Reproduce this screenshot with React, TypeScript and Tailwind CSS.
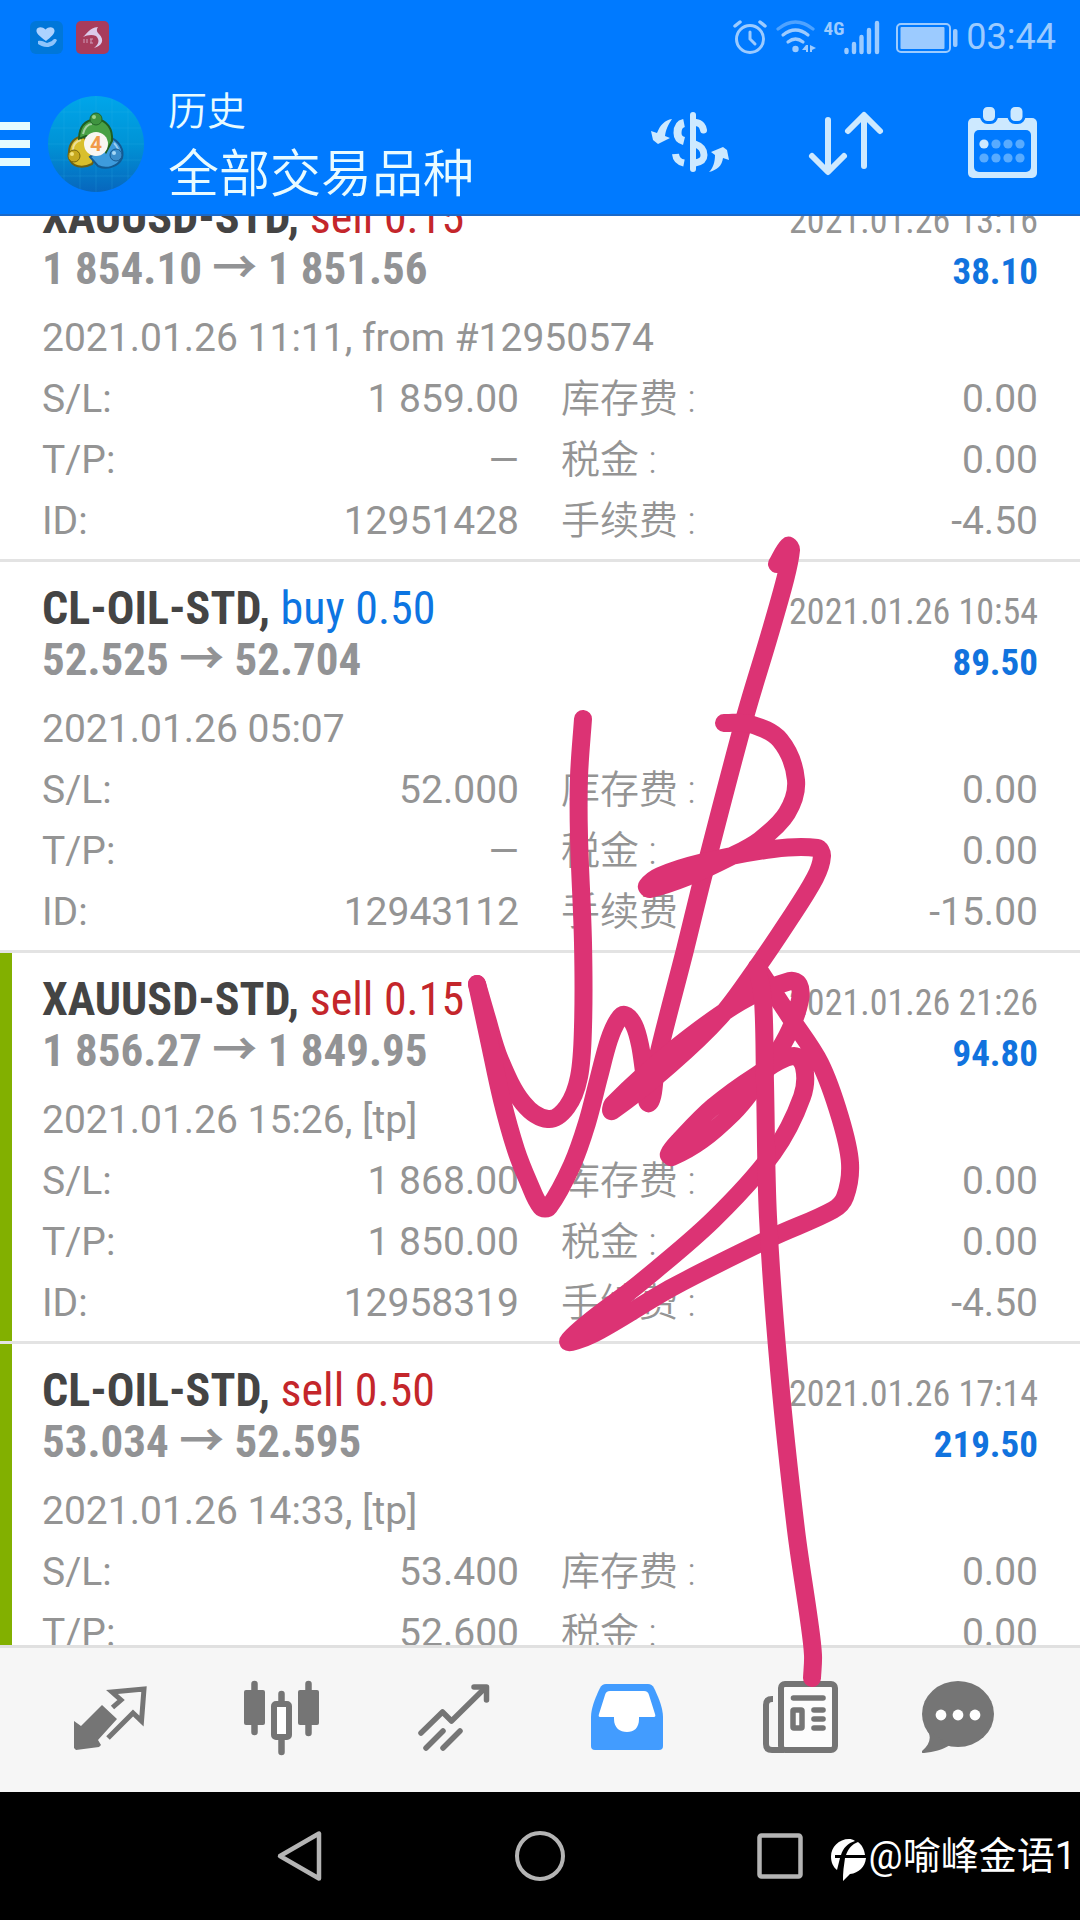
import type { ReactNode } from 'react';

type Side = 'buy' | 'sell';

interface Deal {
  id: string;
  symbol: string;
  side: Side;
  volume: string;
  open: string;
  close: string;
  closedAt: string;
  profit: string;
  note: string;
  sl: string;
  tp: string;
  swap: string;
  tax: string;
  commission: string;
  marked: boolean;
}

const deals: Deal[] = [
  {
    id: '12951428', symbol: 'XAUUSD-STD', side: 'sell', volume: '0.15',
    open: '1 854.10', close: '1 851.56', closedAt: '2021.01.26 13:16', profit: '38.10',
    note: '2021.01.26 11:11, from #12950574',
    sl: '1 859.00', tp: '—', swap: '0.00', tax: '0.00', commission: '-4.50', marked: false,
  },
  {
    id: '12943112', symbol: 'CL-OIL-STD', side: 'buy', volume: '0.50',
    open: '52.525', close: '52.704', closedAt: '2021.01.26 10:54', profit: '89.50',
    note: '2021.01.26 05:07',
    sl: '52.000', tp: '—', swap: '0.00', tax: '0.00', commission: '-15.00', marked: false,
  },
  {
    id: '12958319', symbol: 'XAUUSD-STD', side: 'sell', volume: '0.15',
    open: '1 856.27', close: '1 849.95', closedAt: '2021.01.26 21:26', profit: '94.80',
    note: '2021.01.26 15:26, [tp]',
    sl: '1 868.00', tp: '1 850.00', swap: '0.00', tax: '0.00', commission: '-4.50', marked: true,
  },
  {
    id: '12958102', symbol: 'CL-OIL-STD', side: 'sell', volume: '0.50',
    open: '53.034', close: '52.595', closedAt: '2021.01.26 17:14', profit: '219.50',
    note: '2021.01.26 14:33, [tp]',
    sl: '53.400', tp: '52.600', swap: '0.00', tax: '0.00', commission: '-15.00', marked: true,
  },
];

type Point = [number, number];

// Pen strokes drawn over the list
const strokes: Point[][] = [
  [[583, 719], [579, 777], [579, 837], [583, 943], [583, 1027], [579, 1077], [567, 1107], [548, 1119], [523, 1103], [500, 1060], [486, 1015], [477, 984]],
  [[477, 984], [489, 1040], [502, 1100], [516, 1150], [529, 1183], [541, 1207], [549, 1207], [572, 1165], [587, 1123], [599, 1077], [609, 1040], [618, 1020], [625, 1015], [634, 1025], [640, 1045], [645, 1078], [650, 1102], [657, 1060], [685, 950], [703, 877], [745, 717], [768, 640], [785, 580], [791, 550], [788, 546], [777, 564]],
  [[724, 723], [750, 724], [780, 740], [796, 780], [787, 813], [760, 840], [730, 857], [687, 877], [650, 889], [647, 886], [660, 876], [700, 863], [773, 849], [817, 848], [822, 856], [815, 878], [787, 923], [753, 973], [720, 1017], [670, 1065], [612, 1111], [613, 1104], [673, 1050], [740, 1002], [790, 981], [799, 985], [800, 1000], [790, 1030], [773, 1060], [750, 1093], [733, 1113], [702, 1140], [672, 1157], [669, 1154], [680, 1140], [713, 1107], [757, 1075], [793, 1056], [804, 1067], [802, 1097], [773, 1153], [713, 1220], [640, 1283], [569, 1340], [593, 1334], [673, 1287], [773, 1237], [833, 1210], [845, 1197], [850, 1163], [840, 1117], [820, 1063], [790, 1017], [757, 967]],
  [[757, 967], [763, 1000], [765, 1083], [768, 1217], [779, 1370], [796, 1530], [809, 1620], [813, 1655], [812, 1678]],
];

function smoothPath(points: Point[]) {
  let d = `M${points[0][0]} ${points[0][1]}`;
  for (let i = 0; i < points.length - 1; i++) {
    const p0 = points[i - 1] ?? points[i];
    const p1 = points[i];
    const p2 = points[i + 1];
    const p3 = points[i + 2] ?? p2;
    const len = Math.hypot(p2[0] - p1[0], p2[1] - p1[1]);
    const k1 = Math.min(len / (Math.hypot(p2[0] - p0[0], p2[1] - p0[1]) || 1) / 3, 0.4);
    const k2 = Math.min(len / (Math.hypot(p3[0] - p1[0], p3[1] - p1[1]) || 1) / 3, 0.4);
    const a = [p1[0] + (p2[0] - p0[0]) * k1, p1[1] + (p2[1] - p0[1]) * k1];
    const b = [p2[0] - (p3[0] - p1[0]) * k2, p2[1] - (p3[1] - p1[1]) * k2];
    d += ` C${a[0]} ${a[1]} ${b[0]} ${b[1]} ${p2[0]} ${p2[1]}`;
  }
  return d;
}

function StatusBar() {
  return (
    <div className="flex h-[74px] items-center justify-between pl-[30px] pr-6 text-[#9ccbff]">
      <div className="flex gap-[13px]">
        <svg className="h-[33px] w-[33px]" viewBox="0 0 33 33">
          <rect width="33" height="33" rx="6" fill="#0077d9" />
          <path d="M16 20C9 15 6 12 6.500 9C7 6 12 5 15.500 8.500C19 5 24 6 24.500 9.500C24.800 13 21 16 16 20Z" fill="#acd2ff" />
          <path d="M8 20C12 19 14 21 17 22L22 20C24 17 26 18 27 19C25 24 21 26 17 26C13 26 10 24 8 23Z" fill="#8fc4fb" />
        </svg>
        <svg className="h-[33px] w-[33px]" viewBox="0 0 33 33">
          <rect width="33" height="33" rx="5" fill="#a83c5c" />
          <path d="M7 16C11 13 13 7 22 6C20 9 21 11 23 13C29 19 26 25 18 27C23 23 24 19 20 15C16 13 11 14 7 16Z" fill="#dccbea" />
          <path d="M8 18V22M11 18V22M14 18H17M14 22H17M15 18V22" stroke="#cf9cb8" strokeWidth="1" />
        </svg>
      </div>
      <div className="flex items-center">
        <svg className="h-9 w-9" viewBox="0 0 36 36" fill="none" stroke="currentColor" strokeLinecap="round">
          <circle cx="18" cy="20" r="13.500" strokeWidth="3" />
          <path d="M18 13V20L23 25" strokeWidth="3" />
          <path d="M3 7L8 3M28 3L33 7" strokeWidth="3.500" />
        </svg>
        <svg className="ml-2 h-9 w-[42px]" viewBox="0 0 42 36" fill="none" stroke="currentColor" strokeWidth="3.200" strokeLinecap="round">
          <path d="M2 10Q19.500 -4 37 10" stroke="#4fa3ff" />
          <path d="M7 16Q19.500 6 32 16" />
          <path d="M12 23Q19.500 17 27 23" />
          <circle cx="19.500" cy="30" r="3.200" fill="currentColor" stroke="none" />
          <path d="M30 26L26 31H30V33H32V26ZM34 26V33H36V31L40 29L36 27Z" fill="currentColor" stroke="none" />
        </svg>
        <span className="ml-[6px] self-start font-['Roboto_Condensed',Roboto,sans-serif] text-[19px] font-bold leading-6">4G</span>
        <svg className="h-9 w-9" viewBox="0 0 36 36" stroke="currentColor" strokeWidth="4.400" strokeLinecap="round">
          <path d="M2.500 31V33M10 25V33M17.500 18V33M25 11V33M33 4V33" />
        </svg>
        <svg className="ml-4 h-9 w-[62px]" viewBox="0 0 62 36" fill="none">
          <rect x="1" y="5" width="53" height="28" rx="4" stroke="currentColor" strokeWidth="2" />
          <rect x="4.500" y="8" width="44" height="22" rx="1" fill="#9ccbff" />
          <rect x="57" y="10" width="4.500" height="18" rx="2" fill="currentColor" />
        </svg>
        <span className="ml-2 text-[36px] leading-10">03:44</span>
      </div>
    </div>
  );
}

function AppLogo() {
  return (
    <svg className="h-24 w-24" viewBox="0 0 96 96">
      <defs>
        <linearGradient id="sky" x1="0" y1="0" x2="0" y2="1">
          <stop offset="0" stopColor="#00a6ea" />
          <stop offset="0.5" stopColor="#0093d6" />
          <stop offset="1" stopColor="#0766bd" />
        </linearGradient>
        <clipPath id="disc"><circle cx="48" cy="48" r="48" /></clipPath>
      </defs>
      <circle cx="48" cy="48" r="48" fill="url(#sky)" />
      <g clipPath="url(#disc)" stroke="#35b4ea" strokeOpacity="0.2">
        <path d="M16 0V96M32 0V96M48 0V96M64 0V96M80 0V96M0 16H96M0 32H96M0 48H96M0 64H96M0 80H96" />
      </g>
      <path d="M34 40C22 43 20 52 21 62C24 71 34 73 44 68L50 56L40 45Z" fill="#d9bf2d" stroke="#6d6113" strokeWidth="2" />
      <path d="M61 41C72 45 76 54 74 62C70 71 58 74 50 70L42 61L56 50Z" fill="#3d9bdd" stroke="#135a92" strokeWidth="2" />
      <path d="M31 43C31 30 38 24 48 23C59 24 65 33 64 45L58 56L50 40H38Z" fill="#48a145" stroke="#1f5f22" strokeWidth="2" />
      <path d="M35 38C36 32 40 28 44 28M25 54C25 48 29 45 33 44M66 47C70 51 71 56 70 60" fill="none" stroke="#fff" strokeOpacity="0.5" strokeWidth="2" />
      <circle cx="48" cy="23" r="6" fill="#3f9440" stroke="#24682a" />
      <circle cx="26" cy="60" r="6" fill="#c6a81f" stroke="#75650f" />
      <circle cx="68" cy="59" r="6" fill="#3b8ecb" stroke="#165990" />
      <circle cx="46" cy="21" r="2" fill="#9fd28a" />
      <circle cx="24" cy="58" r="2" fill="#f2e27d" />
      <circle cx="66" cy="57" r="2" fill="#a7d8f6" />
      <circle cx="48" cy="48" r="12" fill="#f8f6f2" />
      <text x="48" y="55" textAnchor="middle" fontSize="21" fontWeight="700" fontFamily="Roboto, sans-serif" fill="#f19a4a">4</text>
    </svg>
  );
}

function Header() {
  return (
    <header className="border-b-2 border-[#1a69c9] bg-[#007aff]">
      <StatusBar />
      <div className="flex h-[140px] items-center">
        <button aria-label="菜单" className="flex h-24 w-[30px] flex-col justify-center gap-[10px]">
          <span className="h-2 w-full bg-[#e4fbff]" />
          <span className="h-2 w-full bg-[#e4fbff]" />
          <span className="h-2 w-full bg-[#e4fbff]" />
        </button>
        <div className="ml-[18px]"><AppLogo /></div>
        <div className="ml-6 flex-1 font-[350] text-[#e9fbff]">
          <p className="text-[39px] leading-[58px]">历史</p>
          <h1 className="mt-1 text-[51px] leading-[60px]">全部交易品种</h1>
        </div>
        <div className="flex items-center gap-[72px] pr-[42px] text-[#cde9ff]">
          <button aria-label="币种">
            <svg className="block h-[72px] w-[84px]" viewBox="0 0 84 72" fill="none" stroke="currentColor">
              <path d="M45 7V61" strokeWidth="6" strokeLinecap="round" />
              <path d="M36 15C31 16 29.500 20 29.500 25C29.500 30 32 32 36 33" strokeWidth="8" />
              <path d="M48 14.500C53 15 55 19 55.500 22" strokeWidth="7" strokeLinecap="round" />
              <path d="M47 36C53 38 56 42 56 47C56 52 53 54 47 55" strokeWidth="7" />
              <path d="M27.500 46C28 51 31 54 36 55" strokeWidth="7" />
              <path d="M24 11C17 12 12 17 9 25L3 23L5 32L10 36L22 30L17 28C18 21 20 17 24 11Z" fill="currentColor" stroke="none" />
              <path d="M61 64C65 60 67 54 67 47L63 44L75 39L79 42L81 52L75 50C74 58 69 62 61 64Z" fill="currentColor" stroke="none" />
            </svg>
          </button>
          <button aria-label="排序">
            <svg className="block h-[72px] w-[84px]" viewBox="0 0 84 72" fill="none" stroke="currentColor" strokeWidth="6" strokeLinecap="round" strokeLinejoin="round">
              <path d="M24 12V63M8 48L24 64L40 48" />
              <path d="M60 58V8M44 23L60 7L76 23" />
            </svg>
          </button>
          <button aria-label="日期">
            <svg className="block h-20 w-[78px]" viewBox="-6 0 78 80">
              <rect x="2" y="14" width="69" height="60" rx="5" fill="currentColor" />
              <rect x="8" y="26" width="57" height="42" rx="5" fill="#007aff" />
              <g fill="currentColor" stroke="#007aff" strokeWidth="3">
                <rect x="15.500" y="1.500" width="15" height="17" rx="6" />
                <rect x="43" y="1.500" width="15" height="17" rx="6" />
              </g>
              <circle cx="18" cy="40" r="4.600" fill="#cde9ff" />
              <g fill="#58abff">
                <circle cx="30" cy="40" r="4.600" />
                <circle cx="42" cy="40" r="4.600" />
                <circle cx="54" cy="40" r="4.600" />
                <circle cx="18" cy="54" r="4.600" />
                <circle cx="30" cy="54" r="4.600" />
                <circle cx="42" cy="54" r="4.600" />
                <circle cx="54" cy="54" r="4.600" />
              </g>
            </svg>
          </button>
        </div>
      </div>
    </header>
  );
}

function Field({ label, value, light }: { label: string; value: string; light?: boolean }) {
  return (
    <div className="flex justify-between">
      <dt className={light ? 'font-[350]' : ''}>{label}</dt>
      <dd>{value}</dd>
    </div>
  );
}

function DealRow({ deal }: { deal: Deal }) {
  return (
    <li className="flex border-b-[3px] border-[#e3e3e3]">
      <div className={deal.marked ? 'w-3 bg-[#82b000]' : 'w-3'} />
      <div className="flex-1 pb-[7px] pl-[30px] pr-[42px] pt-[21px] text-[39px] leading-[61px] text-[#949494]">
        <div className="mb-[14px] font-['Roboto_Condensed',Roboto,'Noto_Sans_CJK_SC',sans-serif]">
          <div className="flex items-baseline justify-between">
            <h2 className="text-[46px] font-bold leading-[51px] text-[#444]">
              {deal.symbol},{' '}
              <span className={deal.side === 'buy' ? 'font-normal text-[#0d75e2]' : 'font-normal text-[#c4262b]'}>
                {deal.side} {deal.volume}
              </span>
            </h2>
            <time className="text-[36px] leading-10">{deal.closedAt}</time>
          </div>
          <div className="flex items-baseline justify-between font-bold">
            <p className="text-[45px] leading-[51px] text-[#929395]">
              {deal.open} → {deal.close}
            </p>
            <p className="text-[37px] leading-10 text-[#1173de]">{deal.profit}</p>
          </div>
        </div>
        <p>{deal.note}</p>
        <dl className="grid grid-cols-2 gap-x-[42px]">
          <Field label="S/L:" value={deal.sl} />
          <Field label="库存费 :" value={deal.swap} light />
          <Field label="T/P:" value={deal.tp} />
          <Field label="税金 :" value={deal.tax} light />
          <Field label="ID:" value={deal.id} />
          <Field label="手续费 :" value={deal.commission} light />
        </dl>
      </div>
    </li>
  );
}

function Tab({ label, active, children }: { label: string; active?: boolean; children: ReactNode }) {
  return (
    <button
      aria-label={label}
      className={`flex flex-1 justify-center ${active ? 'text-[#429cff]' : 'text-[#757575]'}`}
    >
      <svg className="h-24 w-24" viewBox="0 0 96 96" fill="none">{children}</svg>
    </button>
  );
}

function TabBar() {
  return (
    <nav className="flex h-[147px] items-center border-t-[3px] border-[#e0e0e0] bg-[#f6f6f6] px-6">
      <Tab label="行情">
        <path d="M12 49L19 54L40 33L55 47L36 68L39 73L37 75L14 78L12 76Z" fill="currentColor" />
        <path d="M50.500 35.500L59 28L50 20L82 17L79.500 49L71 41L46 66" stroke="currentColor" strokeWidth="5" />
      </Tab>
      <Tab label="图表">
        <g stroke="currentColor" strokeWidth="6.500" strokeLinecap="round">
          <path d="M20.500 12V60M74.500 12V61M47.500 22V80" />
        </g>
        <rect x="10" y="18" width="21" height="35" rx="2" fill="currentColor" />
        <rect x="64" y="18" width="21" height="35" rx="2" fill="currentColor" />
        <rect x="40" y="32" width="15" height="33" rx="2" fill="#fff" stroke="currentColor" strokeWidth="6" />
      </Tab>
      <Tab label="交易">
        <g stroke="currentColor" strokeWidth="5.500" strokeLinecap="round" strokeLinejoin="round">
          <path d="M15 61L36.500 40L45.500 49L79 16" />
          <path d="M68 15H80.500V28" />
          <path d="M20 76L37 59M37 76L54 59" />
        </g>
      </Tab>
      <Tab label="历史" active>
        <path d="M13 74V45C13 35 19 22 22 16Q24 12 28 12H70Q74 12 76 16C79 22 85 35 85 45V74Q85 78 81 78H17Q13 78 13 74Z" fill="currentColor" />
        <path d="M22 45Q20 45 21 42L27 23Q28 19 32 19H66Q70 19 71 23L77 42Q78 45 76 45H61V47C61 56 56 60 49 60C42 60 36 56 36 47V45Z" fill="#fff" />
      </Tab>
      <Tab label="新闻">
        <path d="M23 27H22Q16 27 16 33V72Q16 78 22 78H34" stroke="currentColor" strokeWidth="6" />
        <rect x="31" y="12" width="54" height="66" rx="4" fill="#fcfcfc" stroke="currentColor" strokeWidth="6" />
        <g stroke="currentColor" strokeWidth="5.600" strokeLinecap="round">
          <path d="M43.500 26H73M64 38H73M64 47H73M64 56H73" />
        </g>
        <rect x="43" y="38" width="9" height="18" rx="1" stroke="currentColor" strokeWidth="5.500" />
      </Tab>
      <Tab label="消息">
        <ellipse cx="36" cy="42" rx="36" ry="33" fill="currentColor" />
        <path d="M5 58C10 65 8 72 0 79C-1 81 0 81 2 81C12 80 20 78 28 73Z" fill="currentColor" />
        <g fill="#fff">
          <circle cx="19" cy="43" r="5.400" />
          <circle cx="36" cy="43" r="5.400" />
          <circle cx="53" cy="43" r="5.400" />
        </g>
      </Tab>
    </nav>
  );
}

function SystemNav() {
  return (
    <footer className="relative flex h-32 items-center bg-black px-[180px] text-[#b4b4b4]">
      <button aria-label="返回" className="flex flex-1 justify-center">
        <svg className="h-14 w-14" viewBox="0 0 56 56" fill="none" stroke="currentColor" strokeWidth="4.500" strokeLinejoin="round">
          <path d="M47 5.500V50.500L8 28Z" />
        </svg>
      </button>
      <button aria-label="主页" className="flex flex-1 justify-center">
        <svg className="h-14 w-14" viewBox="0 0 56 56" fill="none" stroke="currentColor" strokeWidth="4">
          <circle cx="28" cy="28" r="23" />
        </svg>
      </button>
      <button aria-label="最近任务" className="flex flex-1 justify-center">
        <svg className="h-14 w-14" viewBox="0 0 56 56" fill="none" stroke="currentColor" strokeWidth="4.500">
          <rect x="7.500" y="7.500" width="41" height="41" rx="2" />
        </svg>
      </button>
      <div className="absolute inset-y-0 right-1 flex items-center gap-[2px] text-white">
        <svg className="mt-2 h-[42px] w-9" viewBox="0 0 36 42">
          <path d="M18 0C8 0 0 8 0 17.500C0 23 2 28 6 31C7 27 8 23 9 19H4V16H10C12 9 17 4 24 2C22 0.500 20 0 18 0Z" fill="currentColor" />
          <path d="M27 3C21 5 17 10 15 16H34C33 10 31 6 27 3Z" fill="currentColor" />
          <path d="M14 19H35C34 28 28 34 19 35L12 42C12 38 12 34 12.500 30Z" fill="currentColor" />
        </svg>
        <span className="text-[38px] leading-[56px]">@喻峰金语1</span>
      </div>
    </footer>
  );
}

export default function App() {
  return (
    <div className="relative flex h-screen flex-col overflow-hidden bg-white font-[Roboto,'Noto_Sans_CJK_SC',sans-serif]" lang="zh-CN">
      <Header />
      <main className="min-h-0 flex-1 overflow-hidden">
        <ul className="-mt-[45px]">
          {deals.map((deal) => (
            <DealRow key={deal.id} deal={deal} />
          ))}
        </ul>
      </main>
      <TabBar />
      <SystemNav />
      <svg
        className="pointer-events-none absolute inset-0 h-full w-full"
        viewBox="0 0 1080 1920"
        fill="none"
        stroke="#dc3374"
        strokeWidth="18"
        strokeLinecap="round"
        strokeLinejoin="round"
      >
        {strokes.map((points, i) => (
          <path key={i} d={smoothPath(points)} />
        ))}
      </svg>
    </div>
  );
}
